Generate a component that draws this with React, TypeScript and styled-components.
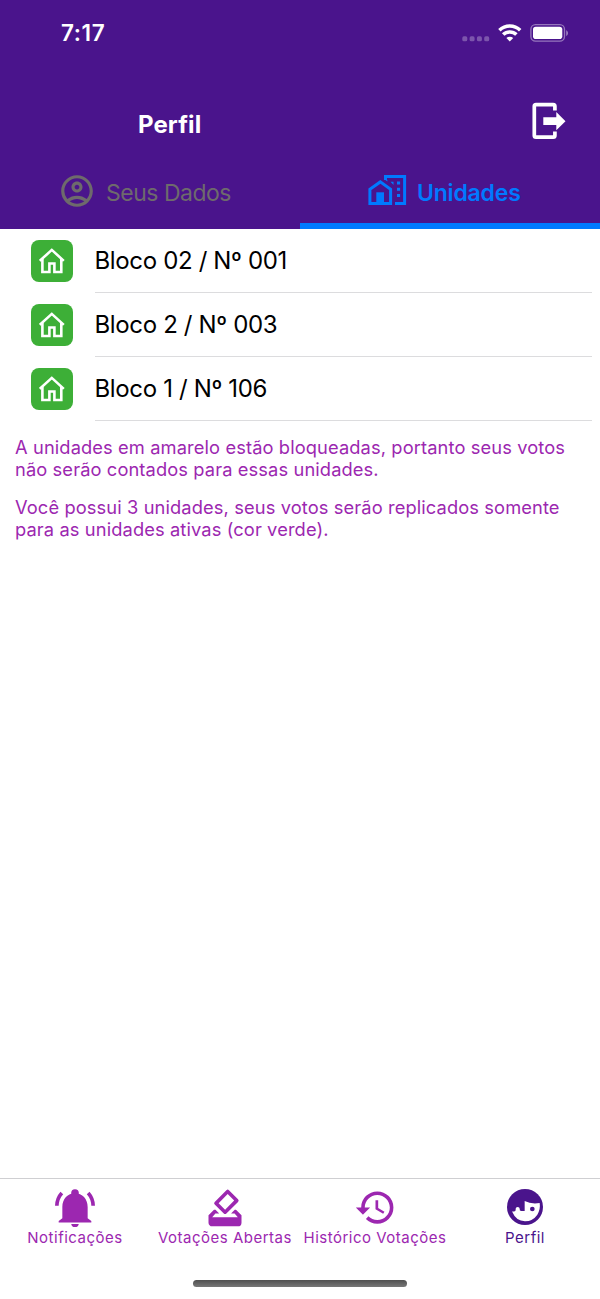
import React from "react";
import styled, { createGlobalStyle } from "styled-components";
import { MdHistory, MdHowToVote, MdOutlineAccountCircle } from "react-icons/md";

const colors = {
  header: "#4a148c",
  accent: "#9c27b0",
  blue: "#007aff",
  muted: "#6e6a6c",
  green: "#3daf37",
};

const GlobalStyle = createGlobalStyle`
  *, *::before, *::after { box-sizing: border-box; }
  body {
    margin: 0;
    background: #fff;
    font-family: Inter, "Liberation Sans", sans-serif;
  }
  svg { display: block; flex-shrink: 0; }
`;

const Screen = styled.div`
  display: flex;
  flex-direction: column;
  width: 600px;
  height: 1299px;
  background: #fff;
  overflow: hidden;
`;

const Header = styled.header`
  display: flex;
  flex-direction: column;
  height: 229px;
  background: ${colors.header};
  color: #fff;
`;

const StatusBar = styled.div`
  display: flex;
  justify-content: space-between;
  height: 66px;
  padding: 0 32px 0 61px;
`;

const Clock = styled.span`
  padding-top: 19px;
  font-size: 22.5px;
  line-height: 27px;
  font-weight: 600;
  letter-spacing: 0.6px;
`;

const StatusIcons = styled.div`
  display: flex;
  padding-top: 23px;
`;

const TitleBar = styled.div`
  display: flex;
  justify-content: space-between;
  height: 91px;
  padding: 0 34px 0 138px;
`;

const Title = styled.h1`
  margin: 0;
  padding-top: 44px;
  font-size: 24px;
  line-height: 30px;
  font-weight: 700;
  letter-spacing: 0.1px;
`;

const LogoutButton = styled.button`
  display: flex;
  height: 40px;
  margin-top: 35px;
  padding: 0;
  border: 0;
  background: none;
`;

const Tabs = styled.div`
  display: flex;
  height: 72px;
`;

const Tab = styled.div<{ $active?: boolean }>`
  display: flex;
  align-items: center;
  gap: 10px;
  width: 300px;
  padding-left: ${(p) => (p.$active ? 67 : 58)}px;
  padding-bottom: ${(p) => (p.$active ? 0 : 4)}px;
  border-bottom: ${(p) => (p.$active ? `6px solid ${colors.blue}` : "0")};
  color: ${(p) => (p.$active ? colors.blue : colors.muted)};
`;

const TabLabel = styled.span<{ $bold?: boolean }>`
  padding-top: ${(p) => (p.$bold ? 5 : 3)}px;
  font-size: 23px;
  line-height: 28px;
  font-weight: ${(p) => (p.$bold ? 600 : 400)};
  letter-spacing: ${(p) => (p.$bold ? "-0.2px" : "-0.5px")};
  white-space: nowrap;
`;

const Content = styled.main`
  flex: 1;
`;

const Row = styled.div`
  display: flex;
  align-items: stretch;
  height: 64px;
  padding: 0 8px 0 30.5px;
`;

const Tile = styled.div`
  display: flex;
  align-items: center;
  justify-content: center;
  width: 42px;
  height: 42px;
  margin: 11px 22px 0 0;
  border-radius: 8px;
  background: ${colors.green};
`;

const RowLabel = styled.div`
  display: flex;
  flex: 1;
  align-items: center;
  padding-top: 1px;
  border-bottom: 1px solid #dcdcde;
  color: #000;
  font-size: 24px;
  line-height: 30px;
  letter-spacing: -0.35px;
`;

const Notes = styled.div`
  padding: 15px 0 0 15px;
  color: ${colors.accent};
`;

const Note = styled.p`
  margin: 0 0 16px;
  font-size: 18.3px;
  line-height: 22px;
  letter-spacing: 0.11px;
  white-space: nowrap;
`;

const BottomBar = styled.nav`
  display: flex;
  height: 102px;
  border-top: 1px solid #cfcfd2;
`;

const NavItem = styled.div<{ $active?: boolean }>`
  display: flex;
  flex-direction: column;
  align-items: center;
  width: 150px;
  color: ${(p) => (p.$active ? colors.header : colors.accent)};
`;

const NavIcon = styled.div<{ $drop?: number }>`
  display: flex;
  align-items: center;
  justify-content: center;
  width: 48px;
  height: 50px;
  padding-top: ${(p) => 6 + (p.$drop ?? 0) * 2}px;
`;

const NavLabel = styled.span`
  font-size: 15px;
  line-height: 18px;
  letter-spacing: 0.5px;
  white-space: nowrap;
`;

const IndicatorArea = styled.div`
  display: flex;
  justify-content: center;
  height: 19px;
`;

const HomeIndicator = styled.div`
  width: 214px;
  height: 7px;
  border-radius: 4px;
  background: linear-gradient(#505050, #777);
`;

const StatusGlyphs = () => (
  <svg width="108" height="20" viewBox="460 23 108 20">
    <g fill="#fff" fillOpacity="0.28">
      <rect x="462.3" y="36.3" width="5" height="5" rx="1.6" />
      <rect x="469.6" y="36.3" width="5" height="5" rx="1.6" />
      <rect x="476.9" y="36.3" width="5" height="5" rx="1.6" />
      <rect x="484.2" y="36.3" width="5" height="5" rx="1.6" />
    </g>
    <g fill="none" stroke="#fff" strokeWidth="3.5">
      <path d="M499.4 30.2a15 15 0 0 1 20.8 0" />
      <path d="M503.2 34.6a9.4 9.4 0 0 1 13.2 0" />
    </g>
    <path d="M509.8 41.4l-3.4-3.3a4.8 4.8 0 0 1 6.8 0z" fill="#fff" />
    <rect x="530.9" y="24.7" width="33.6" height="16.4" rx="4.6" fill="none" stroke="#fff" strokeOpacity="0.42" strokeWidth="1.3" />
    <rect x="533" y="26.8" width="29.3" height="12.2" rx="2.8" fill="#fff" />
    <path d="M566.2 30.2c2.4 1 2.4 4.8 0 5.8z" fill="#fff" fillOpacity="0.45" />
  </svg>
);

const LogoutIcon = () => (
  <svg width="36" height="40" viewBox="530 101 36 40">
    <path d="M554.9 110.5V106.3q0-1.7-1.7-1.7H536q-1.7 0-1.7 1.7V135.5q0 1.7 1.7 1.7h17.2q1.7 0 1.7-1.7V131.5" fill="none" stroke="#fff" strokeWidth="3.7" />
    <path d="M543.3 117.3h13v-5.2l9.2 9.1-9.2 9.1V125h-13z" fill="#fff" />
  </svg>
);

const HomeWorkIcon = () => (
  <svg width="40" height="32" viewBox="367 174 40 32">
    <g fill="none" stroke="currentColor" strokeWidth="3">
      <path d="M369.9 203.4V189.2L380.3 181.9L390.6 189.2V203.4Z" />
      <path d="M385.5 180V176.6H404.6V203.4H395" />
    </g>
    <g fill="currentColor">
      <path d="M376.3 192.3h7.7v11h-7.7z" />
      <path d="M384 177l3.4 3v1.4L384 179z" />
      <path d="M390.5 181.7h3v3.2z" />
      <path d="M397 181.5h3.1v3h-3.1zM397 187.7h3.1v3h-3.1zM397 194h3.1v3h-3.1z" />
    </g>
  </svg>
);

const HouseIcon = () => (
  <svg width="26" height="28" viewBox="38.6 247 26 28">
    <g fill="none" stroke="#fff" strokeWidth="2.6">
      <path d="M39.4 260.9L51.4 249.9L63.4 260.9" />
      <path d="M42 259V272H49V263.5H54V272H60.9V259" />
    </g>
  </svg>
);

const BellIcon = () => (
  <svg width="40" height="38.3" viewBox="165 57 120 115">
    <g fill="none" stroke="currentColor" strokeWidth="11">
      <path d="M170.5 107.5Q171 85 185.5 69" />
      <path d="M279.5 107.5Q279 85 264.5 69" />
    </g>
    <g fill="currentColor">
      <circle cx="225" cy="69" r="11.5" />
      <path d="M187 145V111C187 87 203 70 225 70S263 87 263 111V145L274 153V157.5H176V153Z" />
      <path d="M213.5 162H236.5Q234 172 225 172T213.5 162Z" />
    </g>
  </svg>
);

const FaceIcon = () => (
  <svg width="36" height="36" viewBox="0 0 108 108">
    <circle cx="54" cy="54" r="54" fill="currentColor" />
    <path d="M16 67q8 2 10-3V59q0-5 6-5t6 5q-1 7 5 7H53V36Q72 46 98 42Q101 60 91 77Q78 96 54 97Q27 96 16 69Z" fill="#fff" />
    <circle cx="76" cy="60" r="7" fill="currentColor" />
  </svg>
);

const units = ["Bloco 02 / Nº 001", "Bloco 2 / Nº 003", "Bloco 1 / Nº 106"];

export default function App() {
  return (
    <>
      <GlobalStyle />
      <Screen>
        <Header>
          <StatusBar>
            <Clock>7:17</Clock>
            <StatusIcons>
              <StatusGlyphs />
            </StatusIcons>
          </StatusBar>
          <TitleBar>
            <Title>Perfil</Title>
            <LogoutButton aria-label="Sair">
              <LogoutIcon />
            </LogoutButton>
          </TitleBar>
          <Tabs>
            <Tab>
              <MdOutlineAccountCircle size={38} />
              <TabLabel>Seus Dados</TabLabel>
            </Tab>
            <Tab $active>
              <HomeWorkIcon />
              <TabLabel $bold>Unidades</TabLabel>
            </Tab>
          </Tabs>
        </Header>
        <Content>
          {units.map((unit) => (
            <Row key={unit}>
              <Tile>
                <HouseIcon />
              </Tile>
              <RowLabel>{unit}</RowLabel>
            </Row>
          ))}
          <Notes>
            <Note>
              A unidades em amarelo estão bloqueadas, portanto seus votos
              <br />
              não serão contados para essas unidades.
            </Note>
            <Note>
              Você possui 3 unidades, seus votos serão replicados somente
              <br />
              para as unidades ativas (cor verde).
            </Note>
          </Notes>
        </Content>
        <BottomBar>
          <NavItem>
            <NavIcon $drop={1.2}>
              <BellIcon />
            </NavIcon>
            <NavLabel>Notificações</NavLabel>
          </NavItem>
          <NavItem>
            <NavIcon $drop={1}>
              <MdHowToVote size={44} />
            </NavIcon>
            <NavLabel>Votações Abertas</NavLabel>
          </NavItem>
          <NavItem>
            <NavIcon>
              <MdHistory size={43} />
            </NavIcon>
            <NavLabel>Histórico Votações</NavLabel>
          </NavItem>
          <NavItem $active>
            <NavIcon>
              <FaceIcon />
            </NavIcon>
            <NavLabel>Perfil</NavLabel>
          </NavItem>
        </BottomBar>
        <IndicatorArea>
          <HomeIndicator />
        </IndicatorArea>
      </Screen>
    </>
  );
}
